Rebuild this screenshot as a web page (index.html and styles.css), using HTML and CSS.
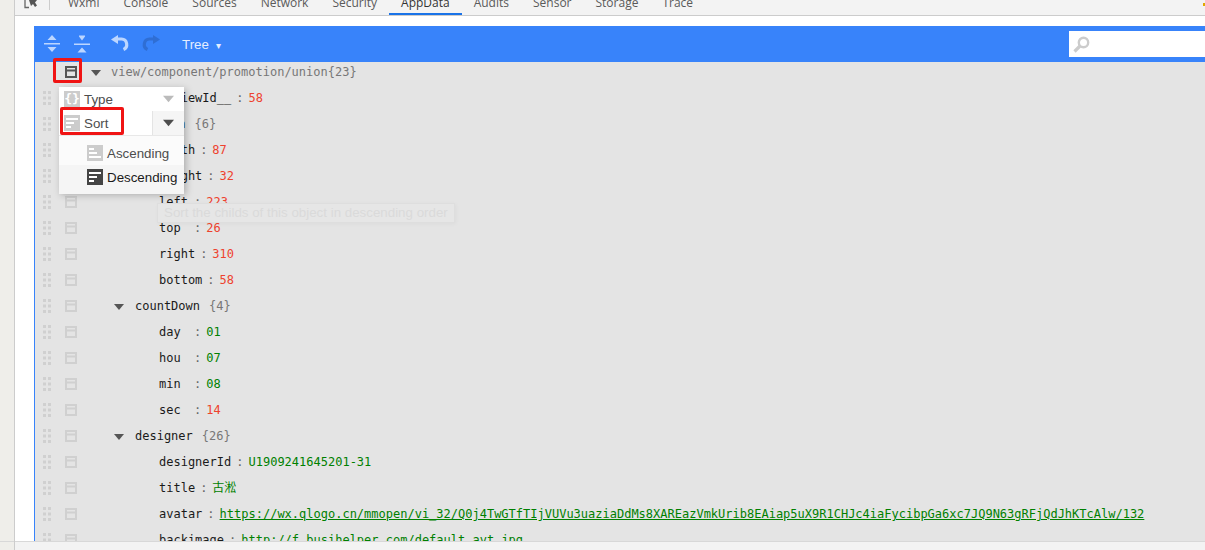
FILE: index.html
```html
<!DOCTYPE html>
<html lang="en">
<head>
<meta charset="utf-8">
<title>AppData</title>
<link rel="stylesheet" href="styles.css">
</head>
<body>
<svg class="defs" width="0" height="0" aria-hidden="true">
  <symbol id="h" viewBox="0 0 8 14"><path d="M0 0h3v3H0zM5 0h3v3H5zM0 5.500h3v3H0zM5 5.500h3v3H5zM0 11h3v3H0zM5 11h3v3H5z"/></symbol>
  <symbol id="b" viewBox="0 0 12 12"><path fill-rule="evenodd" d="M0 0h12v12H0zM2 2v1.500h8V2zM2 5.500V10h8V5.500z"/></symbol>
  <symbol id="a" viewBox="0 0 10 6"><path d="M0 0h10L5 6z"/></symbol>
</svg>
<div class="app">
  <div class="gutter"><div class="gutter-fill"></div></div>
  <div class="right">
    <nav class="tabs">
      <svg class="cursor" width="14" height="10" viewBox="0 0 14 10"><path d="M1 0v7.500h4" fill="none" stroke="#666" stroke-width="1.300"/><path d="M5 0h1l7 0-2 2.500 2 3-2 1.500-2-3-2 2z" fill="#555"/></svg>
      <span class="sep"></span>
      <span class="tab">Wxml</span><span class="tab">Console</span><span class="tab">Sources</span><span class="tab">Network</span><span class="tab">Security</span><span class="tab active">AppData</span><span class="tab">Audits</span><span class="tab">Sensor</span><span class="tab">Storage</span><span class="tab">Trace</span>
      <span class="warn"></span>
    </nav>
    <main class="body">
      <section class="editor">
        <header class="bar">
          <svg class="tool first" width="16" height="18" viewBox="0 0 16 18"><path d="M8 0l4.500 5h-9zM0 8h16v1.500H0zM3.500 12h9L8 17z"/></svg>
          <svg class="tool" width="16" height="18" viewBox="0 0 16 18"><path d="M5 0h6v1L8 5 5 1zM0 8h16v1.500H0zM8 12l4.500 5h-9z" transform="translate(0 .5)"/></svg>
          <svg class="undo" width="20" height="18" viewBox="0 0 20 18"><path d="M7 4h4.500a5.500 5.500 0 0 1 2 10.500" fill="none" stroke="#bcd6ff" stroke-width="3.200"/><path d="M1 4.500L8 0v9z" fill="#bcd6ff"/></svg>
          <svg class="redo" width="20" height="18" viewBox="0 0 20 18"><path d="M13 4H8.500a5.500 5.500 0 0 0-2 10.500" fill="none" stroke="#2f6ed4" stroke-width="3.200"/><path d="M19 4.500L12 0v9z" fill="#2f6ed4"/></svg>
          <span class="mode">Tree <i class="caret">▾</i></span>
          <label class="search">
            <svg width="17" height="17" viewBox="0 0 17 17"><circle cx="10.500" cy="6.500" r="4.700" fill="none" stroke="#ccc" stroke-width="2.400"/><path d="M7 10L1.500 15.500" stroke="#ccc" stroke-width="3.200"/></svg>
          </label>
        </header>
        <div class="tree">
          <div class="row root"><svg class="grip"><use href="#h"/></svg><svg class="box"><use href="#b"/></svg><svg class="arrow l0"><use href="#a"/></svg><span class="path">view/component/promotion/union</span> <span class="count">{23}</span></div>
          <div class="row"><svg class="grip"><use href="#h"/></svg><svg class="box"><use href="#b"/></svg><span class="key l2">__viewId__</span><span class="colon">:</span><span class="num">58</span></div>
          <div class="row"><svg class="grip"><use href="#h"/></svg><svg class="box"><use href="#b"/></svg><svg class="arrow l1"><use href="#a"/></svg><span class="name">menuBtn</span><span class="count">{6}</span></div>
          <div class="row"><svg class="grip"><use href="#h"/></svg><svg class="box"><use href="#b"/></svg><span class="key l2">width</span><span class="colon">:</span><span class="num">87</span></div>
          <div class="row"><svg class="grip"><use href="#h"/></svg><svg class="box"><use href="#b"/></svg><span class="key l2">height</span><span class="colon">:</span><span class="num">32</span></div>
          <div class="row"><svg class="grip"><use href="#h"/></svg><svg class="box"><use href="#b"/></svg><span class="key l2">left</span><span class="colon">:</span><span class="num">223</span></div>
          <div class="row"><svg class="grip"><use href="#h"/></svg><svg class="box"><use href="#b"/></svg><span class="key l2">top</span><span class="colon">:</span><span class="num">26</span></div>
          <div class="row"><svg class="grip"><use href="#h"/></svg><svg class="box"><use href="#b"/></svg><span class="key l2">right</span><span class="colon">:</span><span class="num">310</span></div>
          <div class="row"><svg class="grip"><use href="#h"/></svg><svg class="box"><use href="#b"/></svg><span class="key l2">bottom</span><span class="colon">:</span><span class="num">58</span></div>
          <div class="row"><svg class="grip"><use href="#h"/></svg><svg class="box"><use href="#b"/></svg><svg class="arrow l1"><use href="#a"/></svg><span class="name">countDown</span><span class="count">{4}</span></div>
          <div class="row"><svg class="grip"><use href="#h"/></svg><svg class="box"><use href="#b"/></svg><span class="key l2">day</span><span class="colon">:</span><span class="str">01</span></div>
          <div class="row"><svg class="grip"><use href="#h"/></svg><svg class="box"><use href="#b"/></svg><span class="key l2">hou</span><span class="colon">:</span><span class="str">07</span></div>
          <div class="row"><svg class="grip"><use href="#h"/></svg><svg class="box"><use href="#b"/></svg><span class="key l2">min</span><span class="colon">:</span><span class="str">08</span></div>
          <div class="row"><svg class="grip"><use href="#h"/></svg><svg class="box"><use href="#b"/></svg><span class="key l2">sec</span><span class="colon">:</span><span class="num">14</span></div>
          <div class="row"><svg class="grip"><use href="#h"/></svg><svg class="box"><use href="#b"/></svg><svg class="arrow l1"><use href="#a"/></svg><span class="name">designer</span><span class="count">{26}</span></div>
          <div class="row"><svg class="grip"><use href="#h"/></svg><svg class="box"><use href="#b"/></svg><span class="key l2">designerId</span><span class="colon">:</span><span class="str">U1909241645201-31</span></div>
          <div class="row"><svg class="grip"><use href="#h"/></svg><svg class="box"><use href="#b"/></svg><span class="key l2">title</span><span class="colon">:</span><span class="str">古淞</span></div>
          <div class="row"><svg class="grip"><use href="#h"/></svg><svg class="box"><use href="#b"/></svg><span class="key l2">avatar</span><span class="colon">:</span><span class="str link">https://wx.qlogo.cn/mmopen/vi_32/Q0j4TwGTfTIjVUVu3uaziaDdMs8XAREazVmkUrib8EAiap5uX9R1CHJc4iaFycibpGa6xc7JQ9N63gRFjQdJhKTcAlw/132</span></div>
          <div class="row"><svg class="grip"><use href="#h"/></svg><svg class="box"><use href="#b"/></svg><span class="key l2">backimage</span><span class="colon">:</span><span class="str link">http://f.busihelper.com/default_avt.jpg</span></div>

          <div class="tooltip">Sort the childs of this object in descending order</div>
          <div class="menu">
            <div class="menu-row">
              <span class="mi"><svg width="16" height="16" viewBox="0 0 16 16"><rect width="16" height="16" fill="#ccc"/></svg><b class="brace">{}</b></span>
              <span class="label">Type</span>
              <span class="drop"><svg width="11" height="8"><use href="#a"/></svg></span>
            </div>
            <div class="menu-row sel">
              <span class="mi"><svg width="16" height="16" viewBox="0 0 16 16"><path fill="#ccc" d="M0 0h16v16H0z"/><path fill="#fff" d="M2 3h12v2H2zM2 7h8v2H2zM2 11h5v2H2z"/></svg></span>
              <span class="label">Sort</span>
              <span class="drop dark"><svg width="11" height="8"><use href="#a"/></svg></span>
            </div>
            <div class="sub">
              <div class="sub-row"><svg width="16" height="16" viewBox="0 0 16 16"><path fill="#ccc" d="M0 0h16v16H0z"/><path fill="#fff" d="M2 3h5v2H2zM2 7h8v2H2zM2 11h12v2H2z"/></svg><span class="label">Ascending</span></div>
              <div class="sub-row on"><svg width="16" height="16" viewBox="0 0 16 16"><path fill="#444" d="M0 0h16v16H0z"/><path fill="#fff" d="M2 3h12v2H2zM2 7h8v2H2zM2 11h5v2H2z"/></svg><span class="label">Descending</span></div>
            </div>
          </div>
        </div>
      </section>
      <span class="mark mark-a"></span>
      <span class="mark mark-b"></span>
    </main>
    <footer class="status"></footer>
  </div>
</div>
</body>
</html>
```
FILE: styles.css
```css
* { box-sizing: border-box; }
html, body { margin: 0; height: 100%; overflow: hidden; background: #fff; }
.defs { position: absolute; }
.app { display: flex; width: 1205px; height: 550px; }

.gutter { width: 15px; flex: none; background: #efeeea; border-right: 1px solid #ccc; }
.gutter-fill { height: 542px; border-bottom: 1px solid #d8d8d8; }
.right { flex: 1; min-width: 0; display: flex; flex-direction: column; }

.tabs { height: 16px; flex: none; display: flex; align-items: flex-end; background: #f3f3f3; border-bottom: 1px solid #ccc; overflow: hidden; font: 12px/20px "Open Sans", sans-serif; color: #5a5a5a; }
.cursor { align-self: flex-start; margin: 0 0 0 9px; flex: none; }
.sep { align-self: flex-start; width: 1px; height: 10px; background: #ccc; margin: 0 6px 0 11px; flex: none; }
.tab { height: 15px; padding: 0 12px; line-height: 6px; flex: none; }
.tab.active { color: #333; border-bottom: 2px solid #1a73e8; height: 15px; line-height: 6px; }
.warn { align-self: flex-start; margin: 3px 0 0 auto; width: 2px; height: 3px; background: #e0a800; }

.body { flex: 1; min-height: 0; padding: 10px 0 0 19px; position: relative; overflow: hidden; }
.editor { height: 100%; border-left: 1px solid #3883fa; display: flex; flex-direction: column; }
.bar { height: 36px; flex: none; background: #3883fa; display: flex; align-items: center; }
.tool { fill: #bcd6ff; margin-right: 14px; flex: none; }
.tool.first { margin-left: 9px; }
.undo { margin-left: 6px; flex: none; }
.redo { margin-left: 11px; flex: none; }
.mode { margin-left: 21px; color: #e4eeff; font: 13.33px "Liberation Sans", Arial, sans-serif; }
.caret { font-style: normal; font-size: 10px; margin-left: 3px; }
.search { margin-left: auto; width: 136px; height: 26px; background: #fff; display: flex; align-items: center; padding-left: 4px; }

.tree { flex: 1; min-height: 0; background: #e4e4e4; position: relative; font: 12px/20px "DejaVu Sans Mono", "Noto Sans CJK SC", monospace; color: #1a1a1a; }
.row { height: 20px; margin-bottom: 6px; display: flex; align-items: center; padding-left: 8px; white-space: pre; }
.grip { width: 8px; height: 14px; flex: none; fill: #d0d0d0; }
.box { width: 12px; height: 12px; flex: none; margin-left: 14px; fill: #d0d0d0; }
.root .grip { visibility: hidden; }
.root .box { fill: #555; }
.arrow { width: 10px; height: 6px; flex: none; fill: #555; }
.arrow.l0 { margin: 1px 10px 0 14px; }
.arrow.l1 { margin: 1px 11px 0 37px; }
.path { color: #777; }
.count { color: #777; }
.name { margin-right: 9px; }
.key { min-width: 30px; }
.key.l2 { margin-left: 82px; }
.colon { color: #666; margin: 0 5px; }
.num { color: #ee422e; }
.str { color: #008000; }
.link { text-decoration: underline; }

.menu { position: absolute; left: 24px; top: 25px; width: 125px; height: 106px; background: #fff; box-shadow: 2px 2px 7px rgba(0,0,0,.25); font: 13.33px "Liberation Sans", Arial, sans-serif; color: #4d4d4d; }
.menu-row { height: 24px; display: flex; align-items: center; padding-left: 5px; position: relative; }
.menu-row .mi { width: 16px; height: 16px; flex: none; position: relative; display: block; }
.mi svg { display: block; }
.brace { position: absolute; inset: 0; color: #fff; font: bold 13px/15px "DejaVu Sans Mono", monospace; text-align: center; }
.menu-row .label { margin-left: 4px; }
.drop { margin-left: auto; width: 32px; height: 24px; display: flex; align-items: center; justify-content: center; fill: #bbb; }
.drop.dark { background: #f5f5f5; border-left: 1px solid #e4e4e4; fill: #4d4d4d; }
.sub { border-top: 1px solid #e8e8e8; padding-top: 5px; height: 58px; background: #fbfbfb; }
.sub-row { height: 24px; display: flex; align-items: center; padding-left: 28px; color: #4d4d4d; }
.sub-row .label { margin-left: 4px; }
.sub-row.on { height: 29px; padding-bottom: 5px; background: #f5f5f5; color: #1a1a1a; }

.tooltip { position: absolute; left: 122px; top: 141px; width: 298px; height: 20px; padding-left: 6px; background: #e6e6e6; border: 1px solid #dedede; box-shadow: 1px 1px 4px rgba(0,0,0,.04); font: 13.33px/18px "Liberation Sans", Arial, sans-serif; color: #dadada; white-space: nowrap; }

.mark { position: absolute; border: 3px solid #f01414; border-radius: 2px; pointer-events: none; }
.mark-a { left: 38px; top: 42px; width: 29px; height: 25px; }
.mark-b { left: 45px; top: 91px; width: 64px; height: 28px; }

.status { height: 9px; flex: none; background: #f3f3f3; border-top: 1px solid #d8d8d8; }
```
